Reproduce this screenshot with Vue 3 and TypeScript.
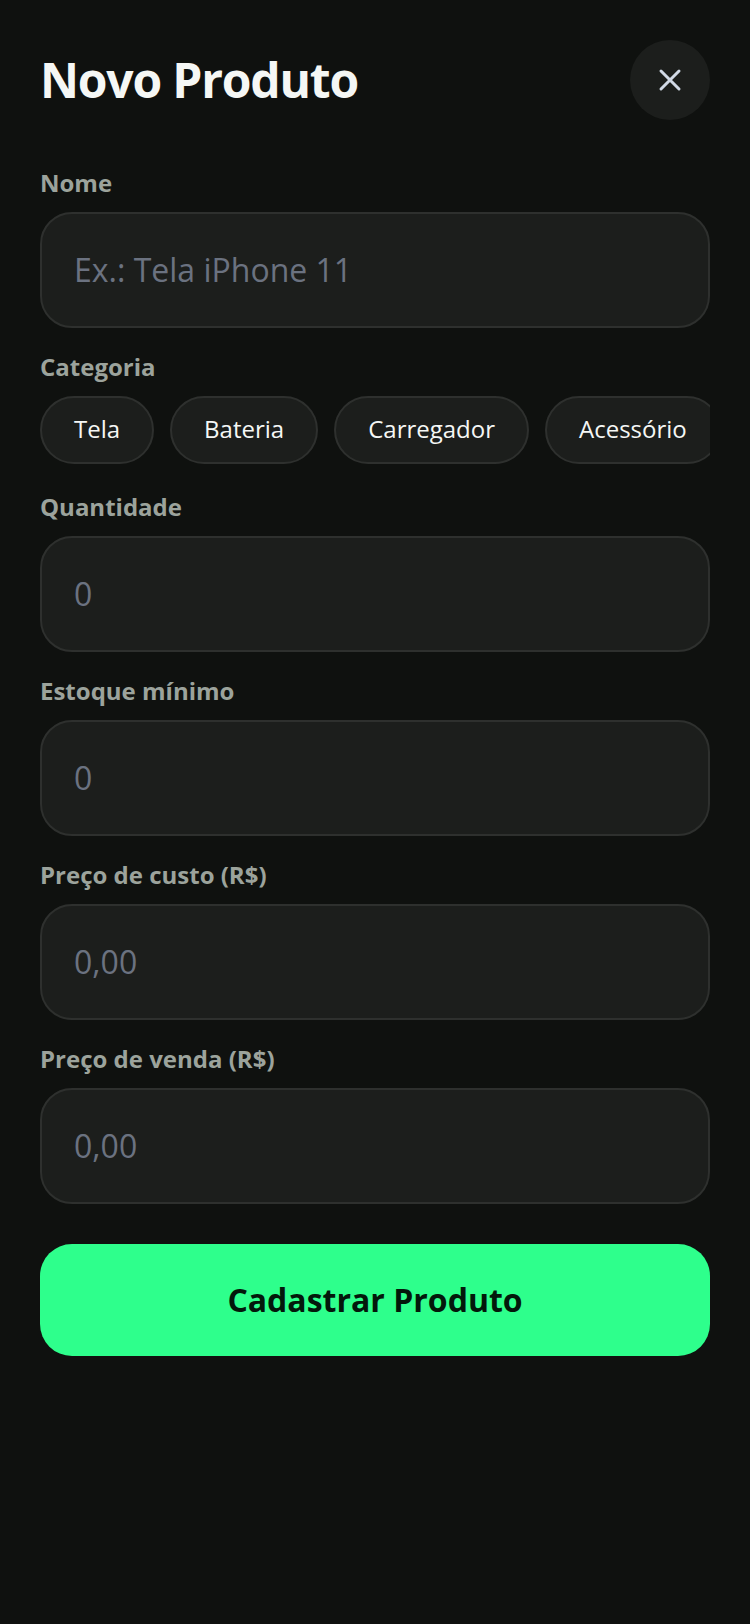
<script setup lang="ts">
import { ref } from 'vue'

interface Field {
  id: string
  label: string
  placeholder: string
  mode: 'numeric' | 'decimal'
}

const categories: string[] = ['Tela', 'Bateria', 'Carregador', 'Acessório']
const category = ref<string>('')
const name = ref<string>('')
const values = ref<Record<string, string>>({})

const fields: Field[] = [
  { id: 'quantidade', label: 'Quantidade', placeholder: '0', mode: 'numeric' },
  { id: 'estoque', label: 'Estoque mínimo', placeholder: '0', mode: 'numeric' },
  { id: 'custo', label: 'Preço de custo (R$)', placeholder: '0,00', mode: 'decimal' },
  { id: 'venda', label: 'Preço de venda (R$)', placeholder: '0,00', mode: 'decimal' },
]
</script>

<template>
  <main class="screen">
    <header class="header">
      <h1>Novo Produto</h1>
      <button class="close" type="button" aria-label="Fechar">
        <svg viewBox="0 0 24 24" width="36" height="36" aria-hidden="true">
          <path d="M18 6 6 18M6 6l12 12" />
        </svg>
      </button>
    </header>

    <form class="form" @submit.prevent>
      <div class="field">
        <label for="nome">Nome</label>
        <input id="nome" v-model="name" type="text" placeholder="Ex.: Tela iPhone 11" />
      </div>

      <div class="field" role="group" aria-labelledby="categoria">
        <span id="categoria" class="label">Categoria</span>
        <div class="chips">
          <button
            v-for="item in categories"
            :key="item"
            class="chip"
            :class="{ selected: category === item }"
            type="button"
            :aria-pressed="category === item"
            @click="category = item"
          >
            {{ item }}
          </button>
        </div>
      </div>

      <div v-for="field in fields" :key="field.id" class="field">
        <label :for="field.id">{{ field.label }}</label>
        <input
          :id="field.id"
          v-model="values[field.id]"
          type="text"
          :inputmode="field.mode"
          :placeholder="field.placeholder"
        />
      </div>

      <button class="submit" type="submit">Cadastrar Produto</button>
    </form>
  </main>
</template>

<style>
body {
  background: #0f110f;
}
</style>

<style scoped>
.screen {
  box-sizing: border-box;
  min-height: 100vh;
  padding: 40px;
  background: #0f110f;
  color: #f5f7f5;
  font-family: 'Open Sans', 'Noto Sans', sans-serif;
}

.header {
  display: flex;
  align-items: center;
  justify-content: space-between;
  margin-bottom: 48px;
}

h1 {
  margin: 0;
  font-size: 48px;
  font-weight: 700;
  line-height: 66px;
  letter-spacing: -0.025em;
}

.close {
  display: flex;
  align-items: center;
  justify-content: center;
  width: 80px;
  height: 80px;
  padding: 0;
  border: 0;
  border-radius: 50%;
  background: #1c1e1c;
}

.close path {
  fill: none;
  stroke: #d1d9e6;
  stroke-width: 2;
  stroke-linecap: round;
}

.form {
  display: flex;
  flex-direction: column;
  gap: 24px;
}

.field {
  display: flex;
  flex-direction: column;
  gap: 14px;
}

label,
.label {
  color: #9ca39c;
  font-size: 24px;
  font-weight: 700;
  line-height: 30px;
}

input {
  box-sizing: border-box;
  width: 100%;
  height: 116px;
  padding: 0 32px 2px;
  border: 2px solid #2e302e;
  border-radius: 32px;
  background: #1c1e1c;
  color: #f5f7f5;
  font-family: inherit;
  font-size: 32px;
}

input::placeholder {
  color: #6b7280;
  opacity: 1;
}

.chips {
  display: flex;
  gap: 16px;
  padding-bottom: 4px;
  overflow: hidden;
}

.chip {
  flex: none;
  box-sizing: border-box;
  height: 68px;
  padding: 0 32px 4px;
  border: 2px solid #2e302e;
  border-radius: 34px;
  background: #1c1e1c;
  color: #f5f7f5;
  font-family: inherit;
  font-size: 24px;
}

.chip.selected {
  border-color: #2eff8c;
}

.submit {
  height: 112px;
  margin-top: 16px;
  padding: 0 32px 2px;
  border: 0;
  border-radius: 32px;
  background: #2eff8c;
  color: #03180b;
  font-family: inherit;
  font-size: 32px;
  font-weight: 700;
}
</style>
